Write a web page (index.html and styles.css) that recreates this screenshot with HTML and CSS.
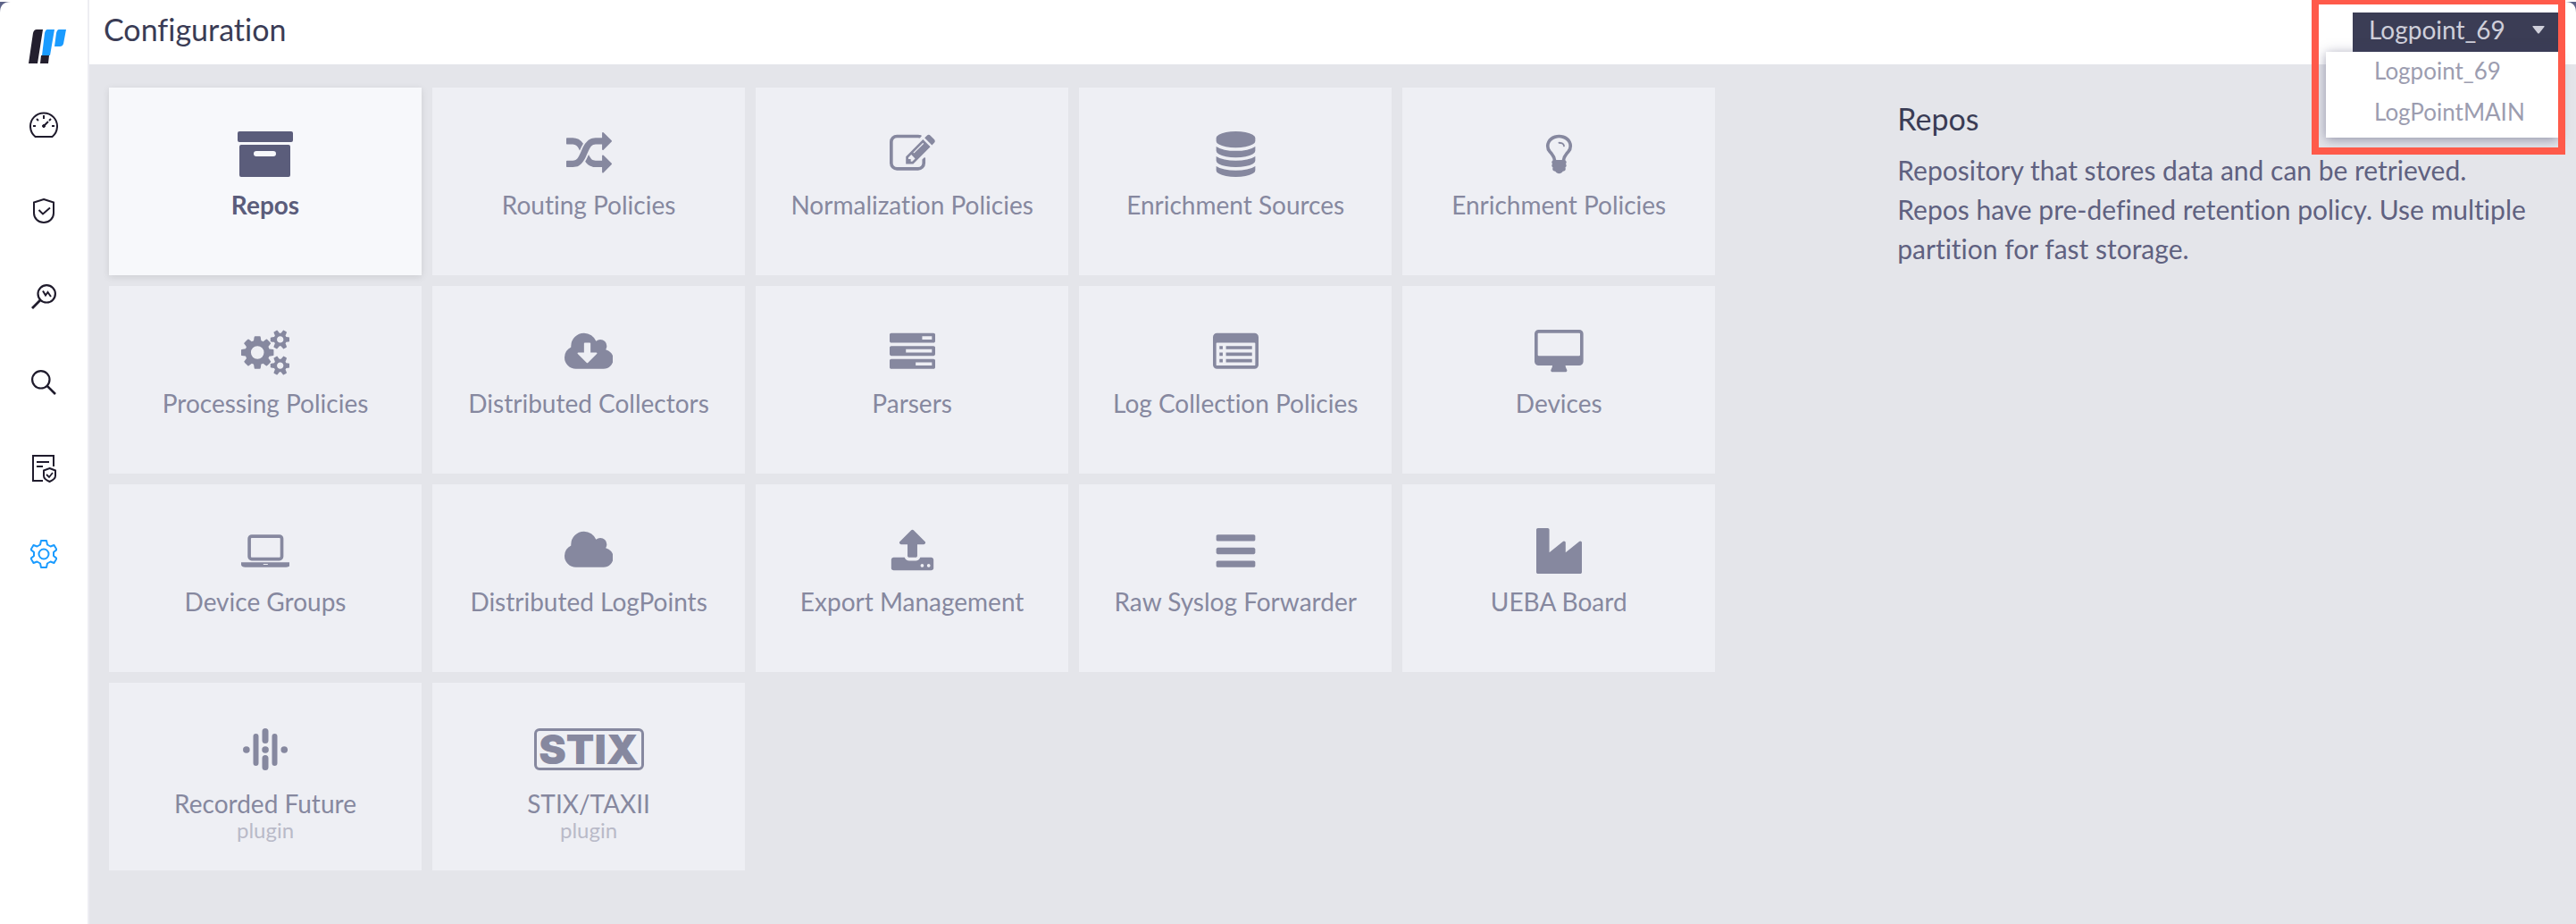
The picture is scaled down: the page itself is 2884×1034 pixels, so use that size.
FILE: index.html
```html
<!DOCTYPE html>
<html lang="en">
<head>
    <meta charset="utf-8">
    <title>Configuration</title>
    <link rel="stylesheet" href="styles.css">
</head>
<body>
    <svg class="corner corner-left" viewBox="0 0 12 12"><path d="M0 0h12Q0 0 0 12z"/></svg>
    <svg class="corner corner-right" viewBox="0 0 12 12"><path d="M12 0H0q12 0 12 12z"/></svg>

    <nav class="sidebar">
        <a href="#" class="logo" aria-label="Logpoint">
            <svg width="42" height="38" viewBox="0 0 42 38">
                <path fill="#231f2e" d="M9 0h7L10 38H0L5 4q1-4 4-4zM14 29h9l-1 9h-9z"/>
                <path fill="#1a9bff" d="M21 0h8l-5 29h-9l3-25q1-4 3-4zM34 0h8l-3 16q-1 3-4 3h-6l2-15q1-4 3-4z"/>
            </svg>
        </a>
        <a href="#" aria-label="Dashboard">
            <svg width="32" height="30" viewBox="0 0 32 30" fill="none" stroke="currentColor" stroke-width="2">
                <path d="M6.500 28a15 15 0 1 1 19 0z" stroke-linejoin="round"/>
                <path d="M16 4v4M8 8l2 2M24 8l-2 2M4 16h3M25 16h3M16 16l5-5"/>
                <circle cx="16" cy="16" r="1.500" fill="currentColor" stroke-width="1"/>
            </svg>
        </a>
        <a href="#" aria-label="Incidents">
            <svg width="24" height="28" viewBox="0 0 24 28" fill="none" stroke="currentColor" stroke-width="2">
                <path d="M12 1l11 3.500v12c0 6-5 10.500-11 10.500s-11-4.500-11-10.500v-12z"/>
                <path d="M6.500 13l4.500 4.500 8-7"/>
            </svg>
        </a>
        <a href="#" aria-label="Search templates">
            <svg width="28" height="28" viewBox="0 0 28 28" fill="none" stroke="currentColor" stroke-width="2.200">
                <circle cx="17.200" cy="10.800" r="9.700"/>
                <path d="M10.200 17.800L1 27" stroke-width="2.800"/>
                <path d="M13 7.500l3 5 2.500-3.500 3.500 5" stroke-width="2"/>
            </svg>
        </a>
        <a href="#" aria-label="Search">
            <svg width="28" height="28" viewBox="0 0 28 28" fill="none" stroke="currentColor" stroke-width="2.200">
                <circle cx="10.800" cy="10.800" r="9.700"/>
                <path d="M17.800 17.800L27 27" stroke-width="2.600"/>
            </svg>
        </a>
        <a href="#" aria-label="Reports">
            <svg width="28" height="32" viewBox="0 0 28 32" fill="none" stroke="currentColor" stroke-width="2">
                <path d="M25 14V2H2v28h11M6 9h14M6 14h7"/>
                <path d="M20.500 16l6.500 2.500v6c0 3-3 5-6.500 6.500-3.500-1.500-6.500-3.500-6.500-6.500v-6z"/>
                <path d="M17 23l3 3 4-5" stroke-width="1.800"/>
            </svg>
        </a>
        <a href="#" class="active" aria-label="Settings">
            <svg width="30" height="32" viewBox="0 0 30 32" fill="none" stroke="currentColor" stroke-width="2" stroke-linejoin="round">
                <path d="M12 1h6l1 4.500 3.500 2 4-1.500 3 5-3.500 3v4l3.500 3-3 5-4-1.500-3.500 2-1 4.500h-6l-1-4.500-3.500-2-4 1.500-3-5 3.500-3v-4l-3.500-3 3-5 4 1.500 3.500-2z"/>
                <circle cx="15" cy="16" r="5.500"/>
            </svg>
        </a>
    </nav>

    <div class="page">
        <header class="topbar">
            <h1>Configuration</h1>
            <div class="host-select">
                <button type="button" class="host-button" aria-haspopup="true" aria-expanded="true">
                    Logpoint_69
                    <svg width="14" height="9" viewBox="0 0 14 9"><path fill="currentColor" d="M1 0h12q1 0 .500 1L8 8q-1 1-2 0L.500 1Q0 0 1 0z"/></svg>
                </button>
                <div class="host-menu">
                    <a href="#">Logpoint_69</a>
                    <a href="#">LogPointMAIN</a>
                </div>
            </div>
        </header>

        <main class="content">
            <div class="tiles">
                <a href="#" class="tile selected">
                    <svg viewBox="0 0 62 51"><path d="M2 0h58q2 0 2 2v8q0 2-2 2H2q-2 0-2-2V2q0-2 2-2zM4 15h53q2 0 2 2v32q0 2-2 2H4q-2 0-2-2V17q0-2 2-2zm17 7q-3 0-3 3t3 3h19q3 0 3-3t-3-3z"/></svg>
                    <span>Repos</span>
                </a>
                <a href="#" class="tile">
                    <svg viewBox="0 0 1792 1792"><path d="M666 481q-60 92-137 273-22-45-37-72.500t-40.500-63.500-51-56.500-63-35-81.500-14.500h-224q-14 0-23-9t-9-23v-192q0-14 9-23t23-9h224q250 0 410 225zm1126 799q0 14-9 23l-320 320q-9 9-23 9-13 0-22.500-9.500t-9.500-22.500v-192q-32 0-85 .5t-81 1-73-1-71-5-64-10.500-63-18.500-58-28.500-59-40-55-53.500-56-69.500q59-93 136-273 22 45 37 72.500t40.500 63.500 51 56.500 63 35 81.500 14.500h256v-192q0-14 9-23t23-9q12 0 24 10l319 319q9 9 9 23zm0-896q0 14-9 23l-320 320q-9 9-23 9-13 0-22.500-9.500t-9.500-22.500v-192h-256q-48 0-87 15t-69 45-51 61.500-45 77.500q-32 62-78 171-29 66-49.500 111t-54 105-64 100-74 83-90 68.500-106.500 42-128 16.500h-224q-14 0-23-9t-9-23v-192q0-14 9-23t23-9h224q48 0 87-15t69-45 51-61.500 45-77.500q32-62 78-171 29-66 49.500-111t54-105 64-100 74-83 90-68.500 106.500-42 128-16.500h256v-192q0-14 9-23t23-9q12 0 24 10l319 319q9 9 9 23z"/></svg>
                    <span>Routing Policies</span>
                </a>
                <a href="#" class="tile">
                    <svg viewBox="0 0 1792 1792"><path d="M888 1184l116-116-152-152-116 116v56h96v96h56zm440-720q-16-16-33 1l-350 350q-17 17-1 33t33-1l350-350q17-17 1-33zm80 594v190q0 119-84.500 203.500t-203.500 84.500h-832q-119 0-203.500-84.500t-84.500-203.500v-832q0-119 84.500-203.500t203.500-84.500h832q63 0 117 25 15 7 18 23 3 17-9 29l-49 49q-14 14-32 8-23-6-45-6h-832q-66 0-113 47t-47 113v832q0 66 47 113t113 47h832q66 0 113-47t47-113v-126q0-13 9-22l64-64q15-15 35-7t20 29zm-96-738l288 288-672 672h-288v-288zm444 132l-92 92-288-288 92-92q28-28 68-28t68 28l152 152q28 28 28 68t-28 68z"/></svg>
                    <span>Normalization Policies</span>
                </a>
                <a href="#" class="tile">
                    <svg viewBox="0 0 1792 1792"><path d="M896 768q237 0 443-43t325-127v170q0 69-103 128t-280 93.500-385 34.500-385-34.500-280-93.500-103-128v-170q119 84 325 127t443 43zm0 768q237 0 443-43t325-127v170q0 69-103 128t-280 93.500-385 34.500-385-34.500-280-93.500-103-128v-170q119 84 325 127t443 43zm0-384q237 0 443-43t325-127v170q0 69-103 128t-280 93.500-385 34.500-385-34.500-280-93.500-103-128v-170q119 84 325 127t443 43zm0-1152q208 0 385 34.500t280 93.500 103 128v128q0 69-103 128t-280 93.500-385 34.500-385-34.500-280-93.500-103-128v-128q0-69 103-128t280-93.500 385-34.500z"/></svg>
                    <span>Enrichment Sources</span>
                </a>
                <a href="#" class="tile">
                    <svg viewBox="0 0 1792 1792"><path d="M1120 576q0 13-9.500 22.500t-22.500 9.500-22.500-9.500-9.500-22.500q0-46-54-71t-106-25q-13 0-22.500-9.500t-9.500-22.500 9.500-22.500 22.500-9.500q50 0 99.500 16t87 54 37.500 90zm160 0q0-72-34.500-134t-90-101.500-123-62-136.500-22.500-136.500 22.500-123 62-90 101.500-34.500 134q0 101 68 180 10 11 30.500 33t30.500 33q128 153 141 298h228q13-145 141-298 10-11 30.500-33t30.500-33q68-79 68-180zm128 0q0 155-103 268-45 49-74.500 87t-59.500 95.500-34 107.500q47 28 47 82 0 37-25 64 25 27 25 64 0 52-45 81 13 23 13 47 0 46-31.500 71t-77.500 25q-20 44-60 70t-87 26-87-26-60-70q-46 0-77.500-25t-31.500-71q0-24 13-47-45-29-45-81 0-37 25-64-25-27-25-64 0-54 47-82-4-50-34-107.500t-59.500-95.500-74.500-87q-103-113-103-268 0-99 44.500-184.500t117-142 164-89 186.500-32.500 186.500 32.500 164 89 117 142 44.500 184.500z"/></svg>
                    <span>Enrichment Policies</span>
                </a>
                <a href="#" class="tile">
                    <svg viewBox="-64 0 1920 1792"><path d="M832 896q0-106-75-181t-181-75-181 75-75 181 75 181 181 75 181-75 75-181zm768 512q0-52-38-90t-90-38-90 38-38 90q0 53 37.500 90.500t90.500 37.500 90.500-37.500 37.500-90.500zm0-1024q0-52-38-90t-90-38-90 38-38 90q0 53 37.500 90.500t90.500 37.500 90.500-37.500 37.500-90.500zm-384 421v185q0 10-7 19.500t-16 10.500l-155 24q-11 35-32 76 34 48 90 115 7 11 7 20 0 12-7 19-23 30-82.500 89.500t-78.500 59.500q-11 0-21-7l-115-90q-37 19-77 31-11 108-23 155-7 24-30 24h-186q-11 0-20-7.500t-10-17.500l-23-153q-34-10-75-31l-118 89q-7 7-20 7-11 0-21-8-144-133-144-160 0-9 7-19 10-14 41-53t47-61q-23-44-35-82l-152-24q-10-1-17-9.500t-7-19.500v-185q0-10 7-19.500t16-10.500l155-24q11-35 32-76-34-48-90-115-7-11-7-20 0-12 7-20 22-30 82-89t79-59q11 0 21 7l115 90q34-18 77-32 11-108 23-154 7-24 30-24h186q11 0 20 7.500t10 17.500l23 153q34 10 75 31l118-89q8-7 20-7 11 0 21 8 144 133 144 160 0 8-7 19-12 16-42 54t-45 60q23 48 34 82l152 23q10 2 17 10.500t7 19.500zm640 533v140q0 16-149 31-12 27-30 52 51 113 51 138 0 4-4 7-122 71-124 71-8 0-46-47t-52-68q-20 2-30 2t-30-2q-14 21-52 68t-46 47q-2 0-124-71-4-3-4-7 0-25 51-138-18-25-30-52-149-15-149-31v-140q0-16 149-31 13-29 30-52-51-113-51-138 0-4 4-7 4-2 35-20t59-34 30-16q8 0 46 46.500t52 67.500q20-2 30-2t30 2q51-71 92-112l6-2q4 0 124 70 4 3 4 7 0 25-51 138 17 23 30 52 149 15 149 31zm0-1024v140q0 16-149 31-12 27-30 52 51 113 51 138 0 4-4 7-122 71-124 71-8 0-46-47t-52-68q-20 2-30 2t-30-2q-14 21-52 68t-46 47q-2 0-124-71-4-3-4-7 0-25 51-138-18-25-30-52-149-15-149-31v-140q0-16 149-31 13-29 30-52-51-113-51-138 0-4 4-7 4-2 35-20t59-34 30-16q8 0 46 46.500t52 67.500q20-2 30-2t30 2q51-71 92-112l6-2q4 0 124 70 4 3 4 7 0 25-51 138 17 23 30 52 149 15 149 31z"/></svg>
                    <span>Processing Policies</span>
                </a>
                <a href="#" class="tile">
                    <svg viewBox="64 0 1920 1792"><path fill-rule="evenodd" d="M1984 1152q0 159-112.500 271.500t-271.500 112.500h-1088q-185 0-316.500-131.500t-131.500-316.500q0-132 71-241.500t187-163.500q-2-28-2-43 0-212 150-362t362-150q158 0 286.500 88t187.500 230q70-62 166-62 106 0 181 75t75 181q0 75-41 138 129 30 213 134.500t84 239.500zM1344 928q0-14-9-23t-23-9h-224v-352q0-13-9.500-22.500t-22.500-9.500h-192q-13 0-22.500 9.500t-9.500 22.500v352h-224q-13 0-22.500 9.500t-9.500 22.500q0 14 9 23l352 352q9 9 23 9t23-9l351-351q10-12 10-24z"/></svg>
                    <span>Distributed Collectors</span>
                </a>
                <a href="#" class="tile">
                    <svg viewBox="0 0 1792 1792"><path d="M1024 1408h640v-128h-640v128zm-384-512h1024v-128h-1024v128zm640-512h384v-128h-384v128zm512 832v256q0 26-19 45t-45 19h-1664q-26 0-45-19t-19-45v-256q0-26 19-45t45-19h1664q26 0 45 19t19 45zm0-512v256q0 26-19 45t-45 19h-1664q-26 0-45-19t-19-45v-256q0-26 19-45t45-19h1664q26 0 45 19t19 45zm0-512v256q0 26-19 45t-45 19h-1664q-26 0-45-19t-19-45v-256q0-26 19-45t45-19h1664q26 0 45 19t19 45z"/></svg>
                    <span>Parsers</span>
                </a>
                <a href="#" class="tile">
                    <svg viewBox="0 0 1792 1792">
                        <path d="M1664 1376v-832q0-32-32-32h-1472q-32 0-32 32v832q0 32 32 32h1472q32 0 32-32zm128-1088v1088q0 66-47 113t-113 47h-1472q-66 0-113-47t-47-113v-1088q0-66 47-113t113-47h1472q66 0 113 47t47 113z"/>
                        <path d="M256 640h128v128H256zM512 640h1024v128H512zM256 896h128v128H256zM512 896h1024v128H512zM256 1152h128v128H256zM512 1152h1024v128H512z"/>
                    </svg>
                    <span>Log Collection Policies</span>
                </a>
                <a href="#" class="tile">
                    <svg viewBox="0 0 1920 1792"><path d="M1792 992v-832q0-13-9.500-22.500t-22.500-9.500h-1600q-13 0-22.500 9.500t-9.500 22.500v832q0 13 9.500 22.500t22.500 9.500h1600q13 0 22.500-9.500t9.500-22.500zm128-832v1088q0 66-47 113t-113 47h-544q0 37 16 77.500t32 71 16 43.500q0 26-19 45t-45 19h-512q-26 0-45-19t-19-45q0-14 16-44t32-70 16-78h-544q-66 0-113-47t-47-113v-1088q0-66 47-113t113-47h1600q66 0 113 47t47 113z"/></svg>
                    <span>Devices</span>
                </a>
                <a href="#" class="tile">
                    <svg viewBox="0 0 1920 1792"><path d="M416 1280q-66 0-113-47t-47-113v-704q0-66 47-113t113-47h1088q66 0 113 47t47 113v704q0 66-47 113t-113 47h-1088zm-32-864v704q0 13 9.500 22.500t22.500 9.500h1088q13 0 22.500-9.500t9.500-22.500v-704q0-13-9.500-22.500t-22.500-9.500h-1088q-13 0-22.500 9.500t-9.500 22.500zm1376 928h160v96q0 40-47 68t-113 28h-1600q-66 0-113-28t-47-68v-96h1760zm-720 96q16 0 16-16t-16-16h-160q-16 0-16 16t16 16h160z"/></svg>
                    <span>Device Groups</span>
                </a>
                <a href="#" class="tile">
                    <svg viewBox="64 0 1920 1792"><path d="M1984 1152q0 159-112.500 271.500t-271.500 112.500h-1088q-185 0-316.500-131.500t-131.500-316.500q0-132 71-241.500t187-163.500q-2-28-2-43 0-212 150-362t362-150q158 0 286.500 88t187.500 230q70-62 166-62 106 0 181 75t75 181q0 75-41 138 129 30 213 134.500t84 239.500z"/></svg>
                    <span>Distributed LogPoints</span>
                </a>
                <a href="#" class="tile">
                    <svg viewBox="0 0 1792 1792"><path d="M1344 1472q0-26-19-45t-45-19-45 19-19 45 19 45 45 19 45-19 19-45zm256 0q0-26-19-45t-45-19-45 19-19 45 19 45 45 19 45-19 19-45zm128-224v320q0 40-28 68t-68 28h-1472q-40 0-68-28t-28-68v-320q0-40 28-68t68-28h427q21 56 70.500 92t110.500 36h256q61 0 110.500-36t70.500-92h427q40 0 68 28t28 68zm-325-648q-17 40-59 40h-256v448q0 26-19 45t-45 19h-256q-26 0-45-19t-19-45v-448h-256q-42 0-59-40-17-39 14-69l448-448q18-19 45-19t45 19l448 448q31 30 14 69z"/></svg>
                    <span>Export Management</span>
                </a>
                <a href="#" class="tile">
                    <svg viewBox="0 0 1792 1792"><path d="M1664 1344v128q0 26-19 45t-45 19h-1408q-26 0-45-19t-19-45v-128q0-26 19-45t45-19h1408q26 0 45 19t19 45zm0-512v128q0 26-19 45t-45 19h-1408q-26 0-45-19t-19-45v-128q0-26 19-45t45-19h1408q26 0 45 19t19 45zm0-512v128q0 26-19 45t-45 19h-1408q-26 0-45-19t-19-45v-128q0-26 19-45t45-19h1408q26 0 45 19t19 45z"/></svg>
                    <span>Raw Syslog Forwarder</span>
                </a>
                <a href="#" class="tile">
                    <svg viewBox="0 0 1792 1792"><path d="M448 0q26 0 45 19t19 45v891l536-429q17-14 40-14 26 0 45 19t19 45v379l536-429q17-14 40-14 26 0 45 19t19 45v1152q0 26-19 45t-45 19h-1664q-26 0-45-19t-19-45v-1664q0-26 19-45t45-19h384z"/></svg>
                    <span>UEBA Board</span>
                </a>
                <a href="#" class="tile plugin">
                    <svg viewBox="0 0 50 47" fill="none" stroke="currentColor" stroke-linecap="round">
                        <path stroke-width="7" d="M25 3.500v10M25 33.500v10"/>
                        <path stroke-width="6" d="M14.500 9v30M35.500 9v30"/>
                        <path stroke-width="7.500" d="M3.800 24h.1M25 24h.1M46.200 24h.1"/>
                    </svg>
                    <span>Recorded Future</span>
                    <small>plugin</small>
                </a>
                <a href="#" class="tile plugin">
                    <b class="stix">STIX</b>
                    <span>STIX/TAXII</span>
                    <small>plugin</small>
                </a>
            </div>

            <aside class="details">
                <h2>Repos</h2>
                <p>Repository that stores data and can be retrieved. Repos have pre-defined retention policy. Use multiple partition for fast storage.</p>
            </aside>
        </main>
    </div>

    <div class="highlight"></div>
</body>
</html>
```

FILE: styles.css
```css
* {
    box-sizing: border-box;
}
body {
    margin: 0;
    min-height: 100vh;
    display: flex;
    position: relative;
    font-family: Lato, "Open Sans", sans-serif;
    font-size: 28px;
    font-variant-ligatures: none;
    color: #5f6180;
    background: #e4e5ea;
}
a {
    color: inherit;
    text-decoration: none;
}
.corner {
    position: absolute;
    top: 2px;
    width: 12px;
    height: 12px;
    fill: #5d6388;
}
.corner-left {
    left: 0;
}
.corner-right {
    right: 0;
}

/* sidebar */
.sidebar {
    flex: none;
    width: 100px;
    padding-top: 12px;
    background: #fff;
    border-right: 2px solid #ededf2;
}
.sidebar a {
    display: flex;
    align-items: center;
    justify-content: center;
    height: 96px;
    color: #1f1b2c;
}
.sidebar a.logo {
    height: 80px;
    padding-left: 8px;
}
.sidebar a.active {
    color: #1a9bff;
}

/* top bar */
.page {
    flex: 1;
    min-width: 0;
}
.topbar {
    display: flex;
    align-items: center;
    justify-content: space-between;
    height: 72px;
    padding: 0 20px 0 16px;
    background: #fff;
}
h1 {
    margin: 0 0 6px;
    font-size: 34px;
    font-weight: 400;
    line-height: 40px;
    color: #3a3c55;
}
.host-select {
    position: relative;
}
.host-button {
    display: flex;
    align-items: center;
    justify-content: space-between;
    width: 230px;
    height: 44px;
    padding: 0 15px 6px 18px;
    border: none;
    font: inherit;
    color: #cfcfda;
    background: #3b3d55;
}
.host-menu {
    position: absolute;
    top: 100%;
    right: 0;
    width: 260px;
    padding-bottom: 4px;
    background: #fff;
    box-shadow: 0 2px 12px rgba(60, 60, 100, 0.5);
}
.host-menu a {
    display: block;
    padding: 0 0 4px 54px;
    font-size: 26px;
    line-height: 42px;
    color: #9c9db0;
}
.highlight {
    position: absolute;
    top: -3px;
    right: 12px;
    width: 284px;
    height: 176px;
    border: 8px solid #ff5a4a;
    pointer-events: none;
}

/* content */
.content {
    display: grid;
    grid-template-columns: 39fr 16fr;
    gap: 204px;
    padding: 26px 22px;
}
.tiles {
    display: grid;
    grid-template-columns: repeat(5, 1fr);
    grid-auto-rows: 210px;
    gap: 12px;
}
.tile {
    display: flex;
    flex-direction: column;
    align-items: center;
    padding-top: 49px;
    line-height: 32px;
    color: #86889f;
    background: #eeeff4;
}
.tile svg {
    height: 51px;
    margin-bottom: 15px;
    fill: currentColor;
}
.tile.selected {
    font-weight: 700;
    color: #5b5d7b;
    background: #f7f8fb;
    box-shadow: 0 2px 8px rgba(0, 0, 0, 0.1);
}
.tile.plugin {
    padding-top: 51px;
}
.tile.plugin svg {
    height: 47px;
    margin-bottom: 21px;
    fill: none;
}
.tile small {
    font-size: 24px;
    line-height: 28px;
    color: #b9bac8;
}
.stix {
    width: 123px;
    height: 47px;
    margin-bottom: 21px;
    border: 3px solid currentColor;
    border-radius: 6px;
    font-family: Inter, sans-serif;
    font-size: 46px;
    font-weight: 900;
    line-height: 41px;
    text-align: center;
}
.details {
    padding: 16px 20px 0 0;
}
.details h2 {
    margin: 0 0 16px;
    font-size: 34px;
    font-weight: 400;
    line-height: 38px;
    color: #3a3c55;
}
.details p {
    margin: 0;
    font-size: 30px;
    line-height: 44px;
}
```
